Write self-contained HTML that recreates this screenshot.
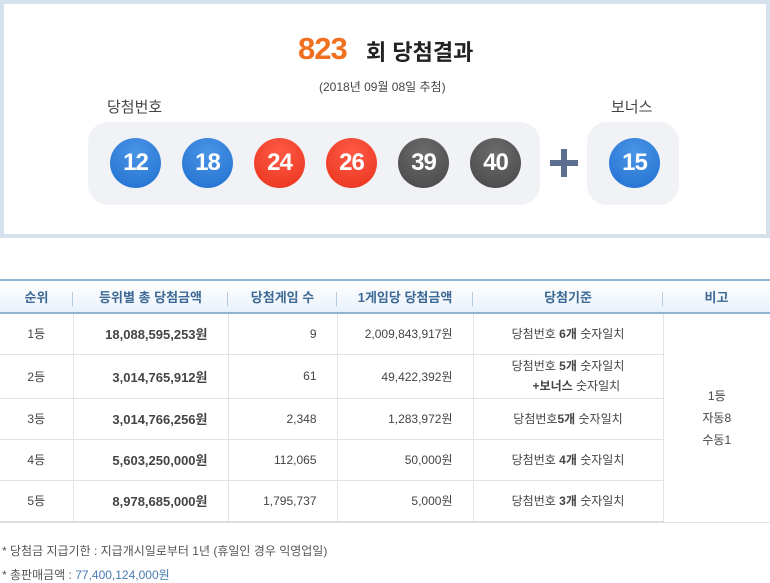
<!DOCTYPE html>
<html><head><meta charset="utf-8"><style>
*{margin:0;padding:0;box-sizing:border-box}
body{width:770px;height:583px;background:#fff;font-family:"Liberation Sans","Noto Sans CJK KR","NanumGothic",sans-serif;position:relative;overflow:hidden;color:#333}
.top{position:absolute;left:0;top:0;width:770px;height:238px;border:4px solid #d5e1ec;background:#fff}
.a{position:absolute}
.ball{position:absolute;width:51px;height:50px;border-radius:50%;color:#fff;font-weight:bold;font-size:24px;text-align:center;line-height:50px;letter-spacing:-1px}
.b{background:radial-gradient(circle at 50% 30%,#4b95e6,#1f6fd0)}
.r{background:radial-gradient(circle at 50% 30%,#ff5a45,#e8321c)}
.g{background:radial-gradient(circle at 50% 30%,#6c6c6c,#464646)}
table{position:absolute;left:0;top:279px;width:770px;border-collapse:collapse;font-size:12px}
th{height:33px;background:linear-gradient(#fff,#e9f2fa);color:#3e6a95;font-size:13px;border-top:2px solid #8fb3d1;border-bottom:2px solid #8fb3d1;position:relative}
th span{position:absolute;right:0;top:11px;height:14px;border-right:1px solid #b6cde0}
td{border-bottom:1px solid #e3e3e3;border-left:1px solid #e3e3e3;text-align:center;color:#444}
td:first-child{border-left:none}
.n{text-align:right;padding-right:20px}
.bold{font-weight:bold;font-size:13px;text-align:right;padding-right:20px}
</style></head><body>
<div class="top"></div>
<div class="a" style="left:298px;top:31px;font-size:31px;font-weight:bold;color:#f07020;letter-spacing:-1px">823</div>
<div class="a" style="left:366px;top:35px;font-size:22px;font-weight:bold;color:#222">회 당첨결과</div>
<div class="a" style="left:319px;top:78px;font-size:12px;color:#444">(2018년 09월 08일 추첨)</div>
<div class="a" style="left:107px;top:96px;font-size:15px;color:#444">당첨번호</div>
<div class="a" style="left:611px;top:96px;font-size:15px;color:#444">보너스</div>
<div class="a" style="left:88px;top:122px;width:452px;height:83px;border-radius:20px;background:#f0f2f5"></div>
<div class="a" style="left:587px;top:122px;width:92px;height:83px;border-radius:20px;background:#f0f2f5"></div>
<div class="ball b" style="left:110px;top:138px">12</div>
<div class="ball b" style="left:182px;top:138px">18</div>
<div class="ball r" style="left:254px;top:138px">24</div>
<div class="ball r" style="left:326px;top:138px">26</div>
<div class="ball g" style="left:398px;top:138px">39</div>
<div class="ball g" style="left:470px;top:138px">40</div>
<div class="ball b" style="left:609px;top:138px">15</div>
<div class="a" style="left:550px;top:160px;width:28px;height:6px;background:#5b6e8f"></div>
<div class="a" style="left:561px;top:149px;width:6px;height:28px;background:#5b6e8f"></div>
<table>
<tr><th style="width:73px">순위<span></span></th><th style="width:155px">등위별 총 당첨금액<span></span></th><th style="width:109px">당첨게임 수<span></span></th><th style="width:136px">1게임당 당첨금액<span></span></th><th style="width:190px">당첨기준<span></span></th><th>비고</th></tr>
<tr style="height:41px"><td>1등</td><td class="bold">18,088,595,253원</td><td class="n">9</td><td class="n">2,009,843,917원</td><td>당첨번호 <b>6개</b> 숫자일치</td><td rowspan="5" style="line-height:22px">1등<br>자동8<br>수동1</td></tr>
<tr style="height:44px"><td>2등</td><td class="bold">3,014,765,912원</td><td class="n">61</td><td class="n">49,422,392원</td><td style="line-height:20px">당첨번호 <b>5개</b> 숫자일치<br>&nbsp;&nbsp;&nbsp;&nbsp;&nbsp;<b>+보너스</b> 숫자일치</td></tr>
<tr style="height:41px"><td>3등</td><td class="bold">3,014,766,256원</td><td class="n">2,348</td><td class="n">1,283,972원</td><td>당첨번호<b>5개</b> 숫자일치</td></tr>
<tr style="height:41px"><td>4등</td><td class="bold">5,603,250,000원</td><td class="n">112,065</td><td class="n">50,000원</td><td>당첨번호 <b>4개</b> 숫자일치</td></tr>
<tr style="height:42px"><td style="border-bottom:2px solid #ddd">5등</td><td class="bold" style="border-bottom:2px solid #ddd">8,978,685,000원</td><td class="n" style="border-bottom:2px solid #ddd">1,795,737</td><td class="n" style="border-bottom:2px solid #ddd">5,000원</td><td style="border-bottom:2px solid #ddd">당첨번호 <b>3개</b> 숫자일치</td></tr>
</table>
<div class="a" style="left:2px;top:542px;font-size:12px;color:#555">* 당첨금 지급기한 : 지급개시일로부터 1년 (휴일인 경우 익영업일)</div>
<div class="a" style="left:2px;top:566px;font-size:12px;color:#555">* 총판매금액 : <span style="color:#4a7ab0">77,400,124,000원</span></div>
</body></html>
